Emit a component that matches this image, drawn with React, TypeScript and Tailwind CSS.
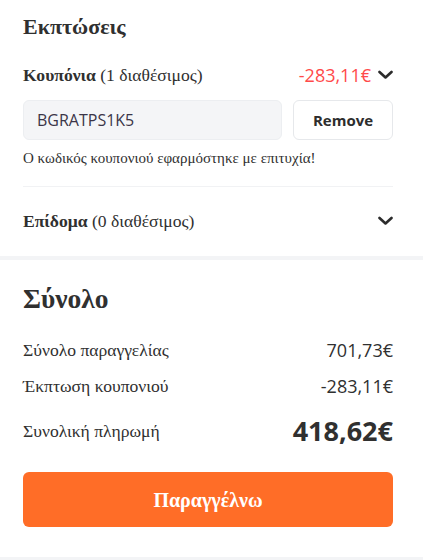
import React from "react";

const serif = { fontFamily: '"Liberation Serif", "Times New Roman", serif' };
const sans = { fontFamily: '"Open Sans", "Liberation Sans", sans-serif' };

function Chevron() {
  return (
    <svg width="15" height="10" viewBox="0 0 15 10" className="shrink-0">
      <polyline points="1.5,2 7.5,7.5 13.5,2" fill="none" stroke="#2b2b2b" strokeWidth="2.6" strokeLinecap="round" strokeLinejoin="round" />
    </svg>
  );
}

export default function App() {
  return (
    <div className="w-[423px] h-[560px] bg-[#f3f4f6] overflow-hidden text-[#303030]">
      <div className="bg-white pl-[23px] pr-[30px] h-[256px] flex flex-col">
        <div className="h-[54px] flex items-center">
          <h2 className="text-[22px] font-bold leading-none" style={serif}>Εκπτώσεις</h2>
        </div>
        <div className="h-[42px] flex items-center justify-between">
          <div className="text-[17.6px]" style={serif}>
            <span className="font-bold">Κουπόνια</span> (1 διαθέσιμος)
          </div>
          <div className="flex items-center gap-[7px]">
            <span className="text-[18px] text-[#ff4a4a]" style={sans}>-283,11€</span>
            <Chevron />
          </div>
        </div>
        <div className="mt-[4px] flex gap-[11px] h-[40px]">
          <div className="flex-1 bg-[#f4f5f7] border border-[#eceef1] rounded-[6px] flex items-center pl-[13px] text-[16px] text-[#3b3548]" style={sans}>
            BGRATPS1K5
          </div>
          <button className="w-[100px] bg-white border border-[#e6e8eb] rounded-[6px] text-[15px] font-bold text-[#2d2d2d]" style={sans}>
            Remove
          </button>
        </div>
        <div className="h-[36px] flex items-center text-[15px]" style={serif}>
          Ο κωδικός κουπονιού εφαρμόστηκε με επιτυχία!
        </div>
        <div className="mt-[10px] border-t border-[#f1f2f4]" />
        <div className="h-[68px] flex items-center justify-between">
          <div className="text-[17.6px]" style={serif}>
            <span className="font-bold">Επίδομα</span> (0 διαθέσιμος)
          </div>
          <Chevron />
        </div>
      </div>
      <div className="mt-[4px] bg-white pl-[23px] pr-[30px] h-[297px] flex flex-col">
        <div className="h-[72px] flex items-center pt-[6px]">
          <h2 className="text-[27.5px] font-bold leading-none" style={serif}>Σύνολο</h2>
        </div>
        <div className="h-[36px] flex items-center justify-between">
          <span className="text-[17.6px]" style={serif}>Σύνολο παραγγελίας</span>
          <span className="text-[18px]" style={sans}>701,73€</span>
        </div>
        <div className="h-[36px] flex items-center justify-between">
          <span className="text-[17.6px]" style={serif}>Έκπτωση κουπονιού</span>
          <span className="text-[18px]" style={sans}>-283,11€</span>
        </div>
        <div className="h-[54px] flex items-center justify-between">
          <span className="text-[17.6px]" style={serif}>Συνολική πληρωμή</span>
          <span className="text-[27px] font-bold" style={sans}>418,62€</span>
        </div>
        <button className="mt-[14px] h-[55px] w-full bg-[#ff6d27] rounded-[6px] text-white text-[20px] font-bold" style={serif}>
          Παραγγέλνω
        </button>
      </div>
    </div>
  );
}
